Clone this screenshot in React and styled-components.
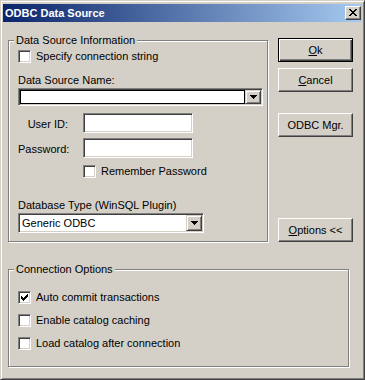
import React from "react";
import styled, { css, createGlobalStyle } from "styled-components";

const face = "#d4d0c8";

const GlobalStyle = createGlobalStyle`
  html, body {
    margin: 0;
    padding: 0;
    background: ${face};
  }
  body {
    font-family: "Liberation Sans", Arial, sans-serif;
    font-size: 11px;
    color: #000;
  }
`;

const Window = styled.div`
  box-sizing: border-box;
  width: 365px;
  height: 380px;
  background: ${face};
  border: 1px solid;
  border-color: ${face} #404040 #404040 ${face};
  box-shadow: inset 1px 1px #fff, inset -1px -1px #808080;
  padding: 3px 2px 2px 2px;
  display: flex;
  flex-direction: column;
`;

const TitleBar = styled.div`
  height: 18px;
  flex: none;
  background: linear-gradient(to right, #0a246a, #a6caf0);
  display: flex;
  align-items: center;
  justify-content: space-between;
  padding: 0 1px 0 2px;
`;

const Title = styled.span`
  color: #fff;
  font-weight: bold;
  font-size: 11px;
  line-height: 18px;
`;

const CloseButton = styled.div`
  box-sizing: border-box;
  width: 16px;
  height: 14px;
  background: ${face};
  border: 1px solid;
  border-color: #fff #404040 #404040 #fff;
  box-shadow: inset -1px -1px #808080;
  padding: 2px 0 0 3px;
  svg {
    display: block;
  }
`;

const Body = styled.div`
  flex: 1;
  padding: 16px 0 0 5px;
  display: flex;
  flex-direction: column;
`;

const TopRow = styled.div`
  display: flex;
  align-items: flex-start;
`;

const Group = styled.div`
  position: relative;
  box-sizing: border-box;
  flex: none;
  width: ${(p) => p.$w}px;
  height: ${(p) => p.$h}px;
  margin-top: ${(p) => p.$mt || 0}px;
  border: 1px solid #808080;
  box-shadow: inset 1px 1px #fff, 1px 1px #fff;
  padding: ${(p) => p.$pt}px 0 0 9px;
  display: flex;
  flex-direction: column;
  align-items: flex-start;
`;

const GroupTitle = styled.span`
  position: absolute;
  left: 5px;
  top: -7px;
  padding: 0 2px;
  line-height: 13px;
  background: ${face};
`;

const CheckRow = styled.label`
  display: flex;
  align-items: center;
  gap: 5px;
  height: 13px;
  line-height: 13px;
  margin-top: ${(p) => p.$mt || 0}px;
  padding-left: ${(p) => p.$indent || 0}px;
`;

const sunken = css`
  border: 1px solid;
  border-color: #808080 #fff #fff #808080;
  box-shadow: inset 1px 1px #404040, inset -1px -1px ${face};
`;

const Box = styled.span`
  box-sizing: border-box;
  flex: none;
  width: 13px;
  height: 13px;
  background: #fff;
  ${sunken}
  svg {
    display: block;
  }
`;

const FieldLabel = styled.div`
  line-height: 13px;
  height: 13px;
  margin-top: ${(p) => p.$mt || 0}px;
`;

const FormRow = styled.div`
  display: flex;
  align-items: center;
  height: 20px;
  margin-top: ${(p) => p.$mt || 0}px;
`;

const FormLabel = styled.span`
  width: 50px;
  text-align: right;
  padding-top: 2px;
`;

const Input = styled.div`
  box-sizing: border-box;
  width: 110px;
  height: 20px;
  margin-left: 15px;
  background: #fff;
  ${sunken}
`;

const Combo = styled.div`
  box-sizing: border-box;
  width: ${(p) => p.$w}px;
  height: ${(p) => p.$h}px;
  margin-top: ${(p) => p.$mt || 0}px;
  background: #fff;
  ${sunken}
  padding: 1px;
  display: flex;
`;

const ComboField = styled.div`
  flex: 1;
  box-sizing: border-box;
  padding-left: 2px;
  display: flex;
  align-items: center;
  ${(p) =>
    p.$framed &&
    css`
      border: 1px solid #000;
    `}
`;

const ArrowButton = styled.div`
  box-sizing: border-box;
  flex: none;
  width: 16px;
  background: ${face};
  border: 1px solid;
  border-color: ${face} #404040 #404040 ${face};
  box-shadow: inset 1px 1px #fff, inset -1px -1px #808080;
  display: flex;
  align-items: center;
  justify-content: center;
  svg {
    display: block;
  }
`;

const ButtonColumn = styled.div`
  display: flex;
  flex-direction: column;
  margin-left: 10px;
`;

const Button = styled.div`
  box-sizing: border-box;
  width: 75px;
  height: 24px;
  margin-top: ${(p) => p.$mt || 0}px;
  background: ${face};
  border: 1px solid;
  border-color: #fff #404040 #404040 #fff;
  box-shadow: inset -1px -1px #808080;
  display: flex;
  align-items: center;
  justify-content: center;
  line-height: 13px;
  ${(p) =>
    p.$default &&
    css`
      border-color: #000;
      box-shadow: inset 1px 1px #fff, inset -1px -1px #404040,
        inset -2px -2px #808080;
    `}
  u {
    text-decoration-thickness: 1px;
    text-underline-offset: 1px;
  }
`;

const CheckMark = () => (
  <svg width="11" height="11" viewBox="1 1 11 11" shapeRendering="crispEdges">
    <path
      fill="#000"
      d="M3 5h1v3h-1z M4 6h1v3h-1z M5 7h1v3h-1z M6 6h1v3h-1z M7 5h1v3h-1z M8 4h1v3h-1z M9 3h1v3h-1z"
    />
  </svg>
);

const CloseGlyph = () => (
  <svg width="8" height="7" viewBox="0 0 8 7" shapeRendering="crispEdges">
    <path
      fill="#000"
      d="M0 0h2v1h-2z M6 0h2v1h-2z M1 1h2v1h-2z M5 1h2v1h-2z M2 2h4v1h-4z M3 3h2v1h-2z M2 4h4v1h-4z M1 5h2v1h-2z M5 5h2v1h-2z M0 6h2v1h-2z M6 6h2v1h-2z"
    />
  </svg>
);

const DownArrow = () => (
  <svg width="7" height="4" viewBox="0 0 7 4" shapeRendering="crispEdges">
    <path fill="#000" d="M0 0h7v1h-7z M1 1h5v1h-5z M2 2h3v1h-3z M3 3h1v1h-1z" />
  </svg>
);

const Check = ({ checked, label, mt, indent }) => (
  <CheckRow $mt={mt} $indent={indent}>
    <Box>{checked && <CheckMark />}</Box>
    <span>{label}</span>
  </CheckRow>
);

export default function App() {
  return (
    <>
      <GlobalStyle />
      <Window>
        <TitleBar>
          <Title>ODBC Data Source</Title>
          <CloseButton>
            <CloseGlyph />
          </CloseButton>
        </TitleBar>

        <Body>
          <TopRow>
            <Group $w={260} $h={202} $mt={2} $pt={9}>
              <GroupTitle>Data Source Information</GroupTitle>
              <Check label="Specify connection string" />

              <FieldLabel $mt={11}>Data Source Name:</FieldLabel>
              <Combo $w={245} $h={18} $mt={1}>
                <ComboField $framed />
                <ArrowButton>
                  <DownArrow />
                </ArrowButton>
              </Combo>

              <FormRow $mt={7}>
                <FormLabel>User ID:</FormLabel>
                <Input />
              </FormRow>
              <FormRow $mt={5}>
                <FormLabel>Password:</FormLabel>
                <Input />
              </FormRow>
              <Check label="Remember Password" mt={7} indent={65} />

              <FieldLabel $mt={21}>Database Type (WinSQL Plugin)</FieldLabel>
              <Combo $w={186} $h={20} $mt={1}>
                <ComboField>Generic ODBC</ComboField>
                <ArrowButton>
                  <DownArrow />
                </ArrowButton>
              </Combo>
            </Group>

            <ButtonColumn>
              <Button $default>
                <span>
                  <u>O</u>k
                </span>
              </Button>
              <Button $mt={6}>
                <span>
                  <u>C</u>ancel
                </span>
              </Button>
              <Button $mt={21}>ODBC Mgr.</Button>
              <Button $mt={81}>
                <span>
                  <u>O</u>ptions &lt;&lt;
                </span>
              </Button>
            </ButtonColumn>
          </TopRow>

          <Group $w={341} $h={98} $mt={27} $pt={21}>
            <GroupTitle>Connection Options</GroupTitle>
            <Check checked label="Auto commit transactions" />
            <Check label="Enable catalog caching" mt={10} />
            <Check label="Load catalog after connection" mt={10} />
          </Group>
        </Body>
      </Window>
    </>
  );
}
